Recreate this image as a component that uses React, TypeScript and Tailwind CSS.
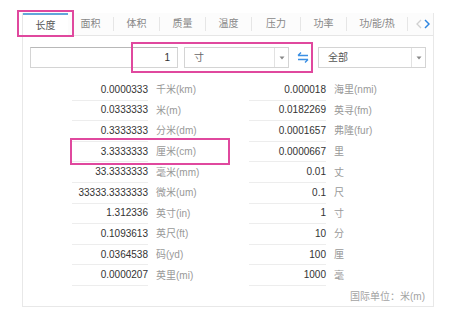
const tabs = ['长度', '面积', '体积', '质量', '温度', '压力', '功率', '功/能/热'];

const rows: [string, string, string, string][] = [
  ['0.0000333', '千米(km)', '0.000018', '海里(nmi)'],
  ['0.0333333', '米(m)', '0.0182269', '英寻(fm)'],
  ['0.3333333', '分米(dm)', '0.0001657', '弗隆(fur)'],
  ['3.3333333', '厘米(cm)', '0.0000667', '里'],
  ['33.3333333', '毫米(mm)', '0.01', '丈'],
  ['33333.3333333', '微米(um)', '0.1', '尺'],
  ['1.312336', '英寸(in)', '1', '寸'],
  ['0.1093613', '英尺(ft)', '10', '分'],
  ['0.0364538', '码(yd)', '100', '厘'],
  ['0.0000207', '英里(mi)', '1000', '毫'],
];

function Caret() {
  return (
    <div className="w-[14px] h-full border-l border-[#e2e2e2] flex items-center justify-center">
      <svg width="6" height="4" viewBox="0 0 6 4">
        <path d="M0.5 0.5h5L3 3.5z" fill="#888" />
      </svg>
    </div>
  );
}

function Cell({ value, label, width }: { value: string; label: string; width: string }) {
  return (
    <div className="w-[184px] h-full flex items-stretch">
      <div className={`${width} flex items-center justify-end border-b border-[#ededed] text-[#333]`}>
        {value}
      </div>
      <div className="ml-[8px] flex items-center text-[#999]">{label}</div>
    </div>
  );
}

export default function App() {
  return (
    <div
      className="relative w-[450px] h-[322px] bg-white overflow-hidden text-[10px] leading-none"
      style={{ fontFamily: '"Liberation Sans", "Noto Sans CJK SC", sans-serif' }}
    >
      <div className="ml-[22px] mt-[13px] w-[412px] h-[294px] border-x border-b border-[#e8e8e8] flex flex-col">
        {/* tab bar */}
        <div className="h-[23px] flex items-stretch border-b border-[#e6e6e6] bg-[#fcfcfc]">
          {tabs.map((t, i) => (
            <div key={t} className="flex items-center">
              {i === 0 ? (
                <div className="w-[45px] h-[23px] -mb-px bg-white border-t-2 border-[#62a6da] flex items-center justify-center text-[#555]">
                  {t}
                </div>
              ) : (
                <>
                  {i > 1 && <span className="w-px h-[14px] bg-[#e6e6e6]" />}
                  <div className={`${i === 7 ? 'w-[60px]' : i === 5 ? 'w-[48px]' : 'w-[45px]'} flex items-center justify-center text-[#888]`}>
                    {t}
                  </div>
                </>
              )}
            </div>
          ))}
          <span className="w-px h-[14px] bg-[#e6e6e6] self-center" />
          <div className="flex items-center gap-[2px] ml-[8px]">
            <svg width="6" height="10" viewBox="0 0 6 10">
              <path d="M5 1L1 5l4 4" fill="none" stroke="#d0d0d0" strokeWidth="1.3" />
            </svg>
            <svg width="6" height="10" viewBox="0 0 6 10">
              <path d="M1 1l4 4-4 4" fill="none" stroke="#2f86e0" strokeWidth="1.5" />
            </svg>
          </div>
        </div>

        <div className="flex-1 flex flex-col pl-[7px] pr-[7px] pt-[11px]">
          {/* input row */}
          <div className="h-[21px] flex items-stretch">
            <div className="w-[148px] border border-[#d4d4d4] border-t-[#b8b8b8] flex items-center justify-end pr-[7px] text-[#333]">
              1
            </div>
            <div className="ml-[6px] w-[105px] border border-[#d4d4d4] flex items-center">
              <div className="flex-1 pl-[9px] text-[#666]">寸</div>
              <Caret />
            </div>
            <div className="ml-[7px] w-[14px] flex items-center justify-center">
              <svg width="12" height="11" viewBox="0 0 12 11">
                <path d="M1 3.5h10M1 3.5l3-3" fill="none" stroke="#3b8fe4" strokeWidth="1.4" />
                <path d="M1 7.5h10M11 7.5l-3 3" fill="none" stroke="#3b8fe4" strokeWidth="1.4" />
              </svg>
            </div>
            <div className="ml-[8px] w-[108px] border border-[#d4d4d4] flex items-center">
              <div className="flex-1 pl-[9px] text-[#555]">全部</div>
              <Caret />
            </div>
          </div>

          {/* result table */}
          <div className="mt-[12px] ml-[42px] flex flex-col">
            {rows.map(([v1, l1, v2, l2]) => (
              <div key={l1} className="h-[20.6px] flex">
                <Cell value={v1} label={l1} width="w-[76px]" />
                <Cell value={v2} label={l2} width="w-[77px]" />
              </div>
            ))}
          </div>

          <div className="mt-[6px] self-end mr-[1px] text-[#a3a3a3]">国际单位：米(m)</div>
        </div>
      </div>

      {/* annotation boxes */}
      <div className="absolute left-[17px] top-[10px] w-[57px] h-[27px] border-2 border-[#e0489e]" />
      <div className="absolute left-[131px] top-[42px] w-[182px] h-[31px] border-2 border-[#e0489e]" />
      <div className="absolute left-[70px] top-[138px] w-[160px] h-[27px] border-2 border-[#e0489e]" />
    </div>
  );
}
